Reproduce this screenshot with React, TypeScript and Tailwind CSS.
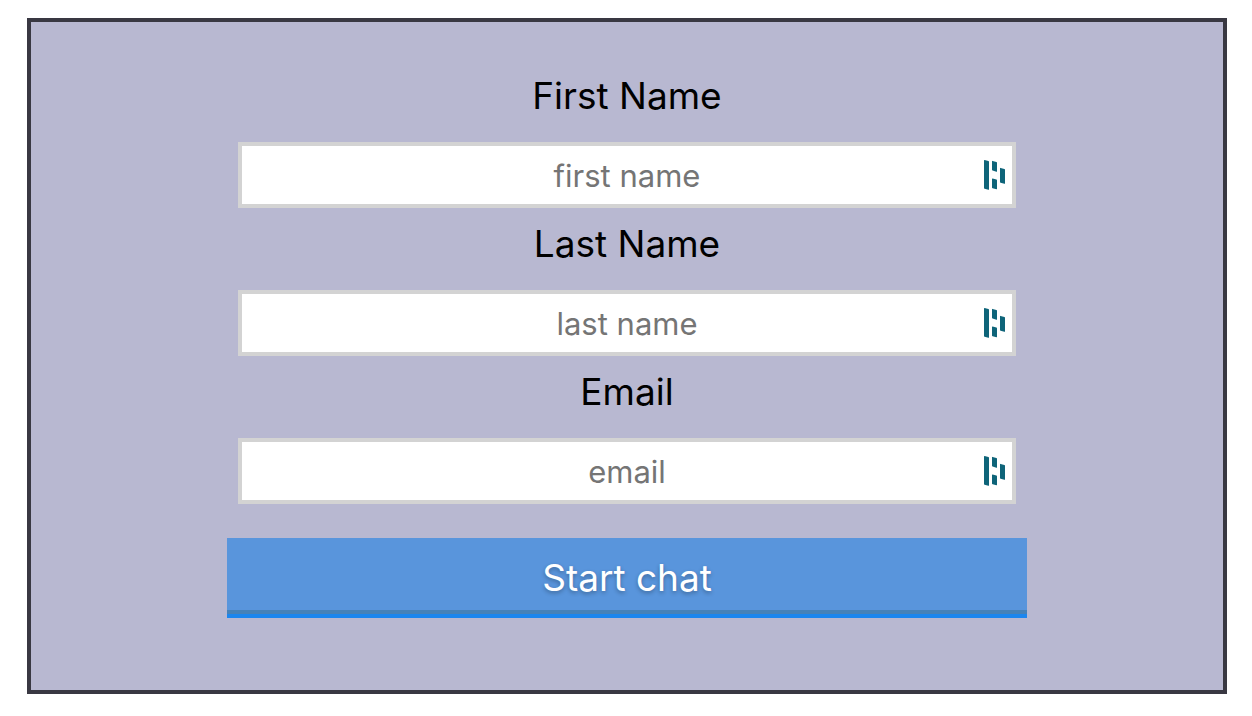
const fields = [
  { id: "firstName", label: "First Name", placeholder: "first name", type: "text" },
  { id: "lastName", label: "Last Name", placeholder: "last name", type: "text" },
  { id: "email", label: "Email", placeholder: "email", type: "email" },
];

function FillIcon() {
  return (
    <svg viewBox="0 0 22 30" className="h-[30px] w-[22px]" fill="#0e6479" aria-hidden="true">
      <path d="M0 .5Q0 0 .6 .1L4.4 1.1Q5 1.3 5 1.9V29.3Q5 30 4.4 29.8L.6 28.8Q0 28.6 0 28Z" />
      <path d="M8 1.3Q8 .7 8.6 .9L12.4 1.9Q13 2.1 13 2.7V11.4Q13 12 12.4 11.8L8.6 10.6Q8 10.4 8 9.8Z" />
      <path d="M8 18.9Q8 18.3 8.6 18.5L12.4 19.6Q13 19.8 13 20.4V28.8Q13 29.4 12.4 29.2L8.6 28.2Q8 28 8 27.4Z" />
      <path d="M16 8.3Q16 7.7 16.6 7.9L20.4 8.9Q21 9.1 21 9.7V23.4Q21 24 20.4 23.8L16.6 22.8Q16 22.6 16 22Z" />
    </svg>
  );
}

function Field({ id, label, placeholder, type }: (typeof fields)[number]) {
  return (
    <div className="flex flex-col items-center">
      <label htmlFor={id} className="text-[37px] leading-[48px] text-black">
        {label}
      </label>
      <div className="mt-[22px] grid w-full items-center px-[11px]">
        <input
          id={id}
          name={id}
          type={type}
          placeholder={placeholder}
          className="col-start-1 row-start-1 h-[66px] w-full border-4 border-[#d3d3d3] bg-white px-2 text-center text-[31px] text-black outline-none placeholder:text-[#757575]"
        />
        <span className="pointer-events-none col-start-1 row-start-1 mr-[10px] justify-self-end">
          <FillIcon />
        </span>
      </div>
    </div>
  );
}

export default function App() {
  return (
    <main className="bg-white pt-[18px] pr-[25px] pb-[22px] pl-[27px] font-['Inter','Liberation_Sans',sans-serif]">
      <form
        className="border-4 border-[#393842] bg-[#b8b8d1] px-4 pt-[50px] pb-[72px]"
        onSubmit={(e) => e.preventDefault()}
      >
        <div className="mx-auto w-full max-w-[800px]">
          <div className="flex flex-col gap-3">
            {fields.map((field) => (
              <Field key={field.id} {...field} />
            ))}
          </div>
          <button
            type="submit"
            className="mt-[34px] block h-20 w-full border-b-4 border-[#1c86ee] bg-[#5995dc] pt-1 text-[37px] text-white shadow-[inset_0_-4px_0_#4682b9] [text-shadow:0_2px_4px_rgba(0,0,0,0.3)]"
          >
            Start chat
          </button>
        </div>
      </form>
    </main>
  );
}
